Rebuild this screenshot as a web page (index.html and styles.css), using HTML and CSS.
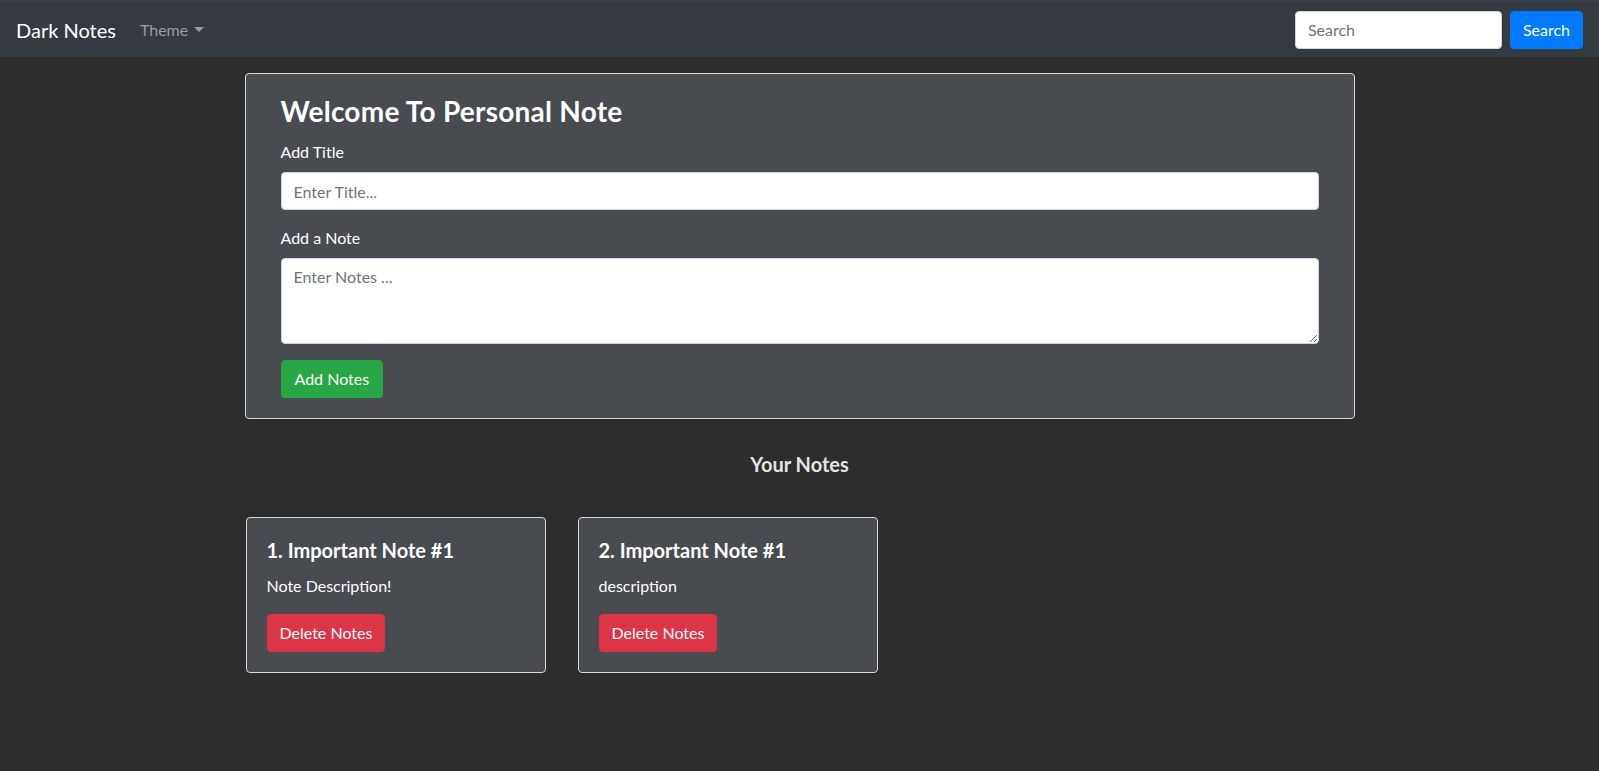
FILE: index.html
```html
<!DOCTYPE html>
<html lang="en">
<head>
<meta charset="utf-8">
<title>Dark Notes</title>
<link rel="stylesheet" href="styles.css">
</head>
<body>
<nav class="navbar">
  <a class="brand" href="#">Dark Notes</a>
  <ul class="nav">
    <li><a class="nav-link dropdown-toggle" href="#">Theme</a></li>
  </ul>
  <form class="search-form">
    <input class="search-input" type="search" placeholder="Search">
    <button class="btn btn-blue" type="button">Search</button>
  </form>
</nav>

<main class="container">
  <section class="panel">
    <h3 class="panel-title">Welcome To Personal Note</h3>
    <div class="form-group">
      <label class="label" for="title">Add Title</label>
      <input class="field" id="title" type="text" placeholder="Enter Title...">
    </div>
    <div class="form-group">
      <label class="label" for="note">Add a Note</label>
      <textarea class="field area" id="note" rows="3" placeholder="Enter Notes ..."></textarea>
    </div>
    <button class="btn btn-green" type="button">Add Notes</button>
  </section>

  <hr class="rule">
  <h5 class="section-title">Your Notes</h5>
  <hr class="rule">

  <div class="notes">
    <div class="note-card">
      <h5 class="note-title">1. Important Note #1</h5>
      <p class="note-text">Note Description!</p>
      <button class="btn btn-red" type="button">Delete Notes</button>
    </div>
    <div class="note-card">
      <h5 class="note-title">2. Important Note #1</h5>
      <p class="note-text">description</p>
      <button class="btn btn-red" type="button">Delete Notes</button>
    </div>
  </div>
</main>
</body>
</html>
```

FILE: styles.css
```css
* { box-sizing: border-box; }

html, body { height: 100%; }

body {
  margin: 0;
  background: #2d2d2d;
  color: #ffffff;
  font-family: Lato, "Open Sans", "Noto Sans", sans-serif;
  font-size: 16px;
  line-height: 24px;
}

/* navbar */
.navbar {
  display: flex;
  align-items: center;
  height: 57px;
  padding: 0 16px;
  background: #343a40;
  border-top: 2px solid #393e4a;
}

.brand {
  color: #ffffff;
  text-decoration: none;
  font-size: 20px;
  line-height: 30px;
  padding: 5px 0;
  margin-right: 16px;
}

.nav {
  list-style: none;
  margin: 0;
  padding: 0;
  display: flex;
}

.nav-link {
  display: block;
  padding: 8px;
  color: rgba(255, 255, 255, 0.5);
  text-decoration: none;
}

.dropdown-toggle::after {
  content: "";
  display: inline-block;
  margin-left: 6px;
  vertical-align: 4px;
  border-top: 5px solid rgba(255, 255, 255, 0.5);
  border-left: 5px solid transparent;
  border-right: 5px solid transparent;
}

.search-form {
  margin-left: auto;
  display: flex;
  align-items: center;
  gap: 8px;
}

.search-input {
  width: 207px;
  height: 38px;
  padding: 6px 12px;
  border: 1px solid #ced4da;
  border-radius: 4px;
  font: inherit;
  color: #495057;
  background: #fff;
}

.search-input::placeholder,
.field::placeholder { color: #6c757d; }

/* buttons */
.btn {
  height: 38px;
  padding: 6px 12px;
  border: 1px solid transparent;
  border-radius: 4px;
  font: inherit;
  color: #fff;
  cursor: pointer;
}

.btn-blue { background: #007bff; border-color: #007bff; }
.btn-green { background: #28a745; border-color: #28a745; padding: 6px 13px; }
.btn-red { background: #dc3545; border-color: #dc3545; }

/* main */
.container {
  width: 1140px;
  margin: 0 auto;
  padding: 0 15px;
}

.panel {
  margin-top: 16px;
  background: #484b4f;
  border: 1px solid #d6d8da;
  border-radius: 4px;
  padding: 20px 35px;
}

.panel-title {
  margin: 0 0 12px;
  font-size: 28px;
  line-height: 34px;
  font-weight: 700;
  letter-spacing: 0.25px;
}

.form-group { margin-bottom: 16px; }

.label {
  display: block;
  margin-bottom: 8px;
}

.field {
  display: block;
  width: 100%;
  height: 38px;
  padding: 6px 12px;
  border: 1px solid #ced4da;
  border-radius: 4px;
  font: inherit;
  color: #495057;
  background: #fff;
}

.area {
  height: 86px;
  resize: vertical;
}

.rule {
  margin: 16px 0;
  border: 0;
  border-top: 1px solid rgba(0, 0, 0, 0.13);
}

.section-title {
  margin: 0;
  text-align: center;
  font-size: 20px;
  line-height: 24px;
  font-weight: 700;
  color: #e4e4e4;
}

.notes {
  display: flex;
  gap: 32px;
  padding: 8px 1px;
}

.note-card {
  width: 300px;
  background: #484b4f;
  border: 1px solid #d6d8da;
  border-radius: 4px;
  padding: 20px;
}

.note-title {
  margin: 0 0 12px;
  font-size: 20px;
  line-height: 24px;
  font-weight: 700;
}

.note-text { margin: 0 0 16px; }
```
